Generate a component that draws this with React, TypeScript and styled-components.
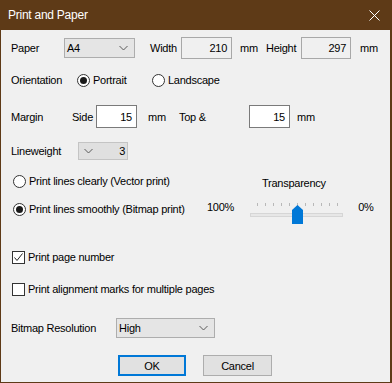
import React from "react";
import styled, { createGlobalStyle } from "styled-components";

const Global = createGlobalStyle`
  html, body { margin: 0; padding: 0; background: #f0f0f0; }
  body { font-family: "Liberation Sans", Arial, sans-serif; font-size: 11px; letter-spacing: -0.25px; color: #000; }
  * { box-sizing: border-box; }
`;

const BROWN = "#5e3a17";

const Window = styled.div`
  width: 392px;
  height: 383px;
  background: #f0f0f0;
  border-left: 1px solid ${BROWN};
  border-right: 2px solid ${BROWN};
  border-bottom: 1px solid ${BROWN};
  display: flex;
  flex-direction: column;
  overflow: hidden;
`;

const TitleBar = styled.div`
  height: 30px;
  margin: 0 -2px 0 -1px;
  background: ${BROWN};
  color: #fff;
  display: flex;
  align-items: center;
  justify-content: space-between;
  padding: 0 12px 0 8px;
  font-size: 12px;
  flex: none;
`;

const Content = styled.div`
  padding-left: 10px;
  display: flex;
  flex-direction: column;
`;

const Row = styled.div<{ $top: number; $h: number }>`
  display: flex;
  align-items: center;
  margin-top: ${(p) => p.$top}px;
  height: ${(p) => p.$h}px;
  white-space: nowrap;
`;

const Cell = styled.span<{ $w?: number; $ml?: number }>`
  display: inline-block;
  flex: none;
  ${(p) => (p.$w ? `width: ${p.$w}px;` : "")}
  margin-left: ${(p) => p.$ml ?? 0}px;
  line-height: 16px;
`;

const Combo = styled.div<{ $w: number; $h: number }>`
  width: ${(p) => p.$w}px;
  height: ${(p) => p.$h}px;
  flex: none;
  background: #e5e5e5;
  border: 1px solid #adadad;
  display: flex;
  align-items: center;
  justify-content: space-between;
  padding: 0 6px 0 2px;
`;

const NumInput = styled.div<{ $w: number; $h: number; $ro?: boolean }>`
  width: ${(p) => p.$w}px;
  height: ${(p) => p.$h}px;
  flex: none;
  background: ${(p) => (p.$ro ? "#f0f0f0" : "#fff")};
  border: 1px solid ${(p) => (p.$ro ? "#a8a8a8" : "#7a7a7a")};
  display: flex;
  align-items: center;
  justify-content: flex-end;
  padding-right: 4px;
`;

const Spin = styled.div`
  width: 50px;
  height: 18px;
  flex: none;
  background: #e0e0e0;
  border: 1px solid #c4c4c4;
  display: flex;
  align-items: center;
  justify-content: space-between;
  padding: 0 2px 0 5px;
`;

const Chevron = () => (
  <svg width="9" height="6" viewBox="0 0 9 6">
    <path d="M0.5 1 L4.5 5 L8.5 1" fill="none" stroke="#5a5a5a" strokeWidth="1" />
  </svg>
);

const Option = styled.label<{ $w?: number; $ml?: number }>`
  display: flex;
  align-items: center;
  flex: none;
  ${(p) => (p.$w ? `width: ${p.$w}px;` : "")}
  margin-left: ${(p) => p.$ml ?? 0}px;
  gap: 3px;
`;

const RadioCircle = styled.span<{ $on?: boolean }>`
  width: 13px;
  height: 13px;
  border-radius: 50%;
  border: 1px solid #333;
  background: #fff;
  display: flex;
  align-items: center;
  justify-content: center;
  flex: none;
  &::after {
    content: "";
    display: ${(p) => (p.$on ? "block" : "none")};
    width: 7px;
    height: 7px;
    border-radius: 50%;
    background: #1a1a1a;
  }
`;

const CheckBox = styled.span`
  width: 13px;
  height: 13px;
  border: 1px solid #333;
  background: #fff;
  flex: none;
  display: flex;
  align-items: center;
  justify-content: center;
`;

const Section = styled.div`
  display: flex;
  margin-top: 11px;
  height: 53px;
`;

const LeftCol = styled.div`
  width: 196px;
  display: flex;
  flex-direction: column;
  gap: 8px;
  padding-left: 2px;
`;

const OptRow = styled.div`
  height: 20px;
  display: flex;
  align-items: center;
  white-space: nowrap;
`;

const RightCol = styled.div`
  display: flex;
  flex-direction: column;
  padding-top: 2px;
`;

const TransLabel = styled.div`
  height: 20px;
  line-height: 20px;
  padding-left: 55px;
`;

const SliderRow = styled.div`
  display: flex;
  align-items: flex-start;
  margin-top: 6px;
  white-space: nowrap;
`;

const SliderBox = styled.div`
  position: relative;
  width: 93px;
  height: 25px;
  margin: 1px 15px 0 16px;
`;

const Ticks = styled.div`
  position: absolute;
  left: 7px;
  top: 3px;
  width: 81px;
  height: 3px;
  display: flex;
  justify-content: space-between;
  span {
    width: 1px;
    height: 3px;
    background: #b8b8b8;
  }
`;

const Track = styled.div`
  position: absolute;
  left: 0;
  top: 13px;
  width: 93px;
  height: 4px;
  background: #e7e7e7;
  border: 1px solid #d6d6d6;
`;

const Thumb = styled.svg`
  position: absolute;
  left: 42px;
  top: 5px;
`;

const CheckRow = styled.div<{ $top: number }>`
  margin-top: ${(p) => p.$top}px;
  height: 20px;
  display: flex;
  align-items: center;
  gap: 3px;
  padding-left: 1px;
  white-space: nowrap;
`;

const ButtonRow = styled.div`
  display: flex;
  margin-top: 17px;
  padding-left: 107px;
  gap: 17px;
`;

const Button = styled.div<{ $def?: boolean; $w: number }>`
  width: ${(p) => p.$w}px;
  height: 21px;
  background: #e1e1e1;
  border: ${(p) => (p.$def ? "2px solid #0078d7" : "1px solid #adadad")};
  display: flex;
  align-items: center;
  justify-content: center;
`;

export default function App() {
  return (
    <>
      <Global />
      <Window>
        <TitleBar>
          <span>Print and Paper</span>
          <svg width="11" height="11" viewBox="0 0 11 11">
            <path d="M0.5 0.5 L10.5 10.5 M10.5 0.5 L0.5 10.5" stroke="#fff" strokeWidth="1" />
          </svg>
        </TitleBar>
        <Content>
          <Row $top={7} $h={22}>
            <Cell $w={53}>Paper</Cell>
            <Combo $w={71} $h={20}>
              <span>A4</span>
              <Chevron />
            </Combo>
            <Cell $w={31} $ml={15}>Width</Cell>
            <NumInput $w={51} $h={22} $ro>210</NumInput>
            <Cell $w={26} $ml={8}>mm</Cell>
            <Cell $w={35}>Height</Cell>
            <NumInput $w={50} $h={22} $ro>297</NumInput>
            <Cell $ml={9}>mm</Cell>
          </Row>
          <Row $top={10} $h={22}>
            <Cell $w={66}>Orientation</Cell>
            <Option $w={75}>
              <RadioCircle $on />
              <span>Portrait</span>
            </Option>
            <Option>
              <RadioCircle />
              <span>Landscape</span>
            </Option>
          </Row>
          <Row $top={14} $h={23}>
            <Cell $w={61}>Margin</Cell>
            <Cell $w={24}>Side</Cell>
            <NumInput $w={41} $h={23}>15</NumInput>
            <Cell $w={31} $ml={11}>mm</Cell>
            <Cell $w={70}>Top &amp;</Cell>
            <NumInput $w={41} $h={23}>15</NumInput>
            <Cell $ml={7}>mm</Cell>
          </Row>
          <Row $top={14} $h={18}>
            <Cell $w={67}>Lineweight</Cell>
            <Spin>
              <Chevron />
              <span>3</span>
            </Spin>
          </Row>
          <Section>
            <LeftCol>
              <OptRow>
                <Option>
                  <RadioCircle />
                  <span>Print lines clearly (Vector print)</span>
                </Option>
              </OptRow>
              <OptRow>
                <Option>
                  <RadioCircle $on />
                  <span>Print lines smoothly (Bitmap print)</span>
                </Option>
              </OptRow>
            </LeftCol>
            <RightCol>
              <TransLabel>Transparency</TransLabel>
              <SliderRow>
                <Cell>100%</Cell>
                <SliderBox>
                  <Ticks>
                    {Array.from({ length: 11 }).map((_, i) => (
                      <span key={i} />
                    ))}
                  </Ticks>
                  <Track />
                  <Thumb width="11" height="19" viewBox="0 0 11 19">
                    <path d="M0 5 L5.5 0 L11 5 L11 19 L0 19 Z" fill="#0078d7" />
                  </Thumb>
                </SliderBox>
                <Cell>0%</Cell>
              </SliderRow>
            </RightCol>
          </Section>
          <CheckRow $top={23}>
            <CheckBox>
              <svg width="11" height="11" viewBox="0 0 11 11">
                <path d="M1.5 5.5 L4 8.5 L9.5 1.5" fill="none" stroke="#222" strokeWidth="1" />
              </svg>
            </CheckBox>
            <span>Print page number</span>
          </CheckRow>
          <CheckRow $top={12}>
            <CheckBox />
            <span>Print alignment marks for multiple pages</span>
          </CheckRow>
          <Row $top={19} $h={20}>
            <Cell $w={105}>Bitmap Resolution</Cell>
            <Combo $w={99} $h={20}>
              <span>High</span>
              <Chevron />
            </Combo>
          </Row>
          <ButtonRow>
            <Button $def $w={68}>OK</Button>
            <Button $w={69}>Cancel</Button>
          </ButtonRow>
        </Content>
      </Window>
    </>
  );
}
